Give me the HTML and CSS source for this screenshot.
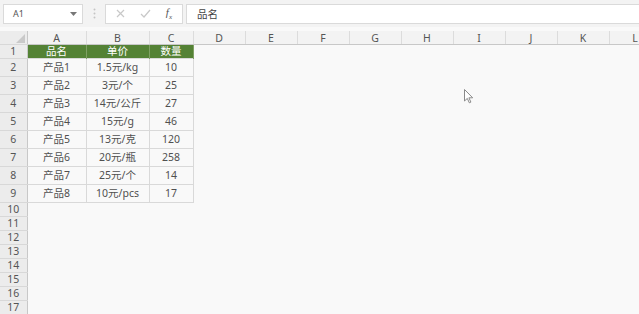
FILE: index.html
```html
<!DOCTYPE html>
<html lang="zh">
<head>
    <meta charset="UTF-8">
    <title>Sheet1</title>
    <link rel="stylesheet" href="styles.css">
</head>
<body>
    <div class="toolbar">
        <div class="namebox">
            <span>A1</span>
            <svg class="drop" width="7" height="4" viewBox="0 0 7 4"><path d="M0 0h7L3.5 4z" fill="#777"/></svg>
        </div>
        <div class="grip">
            <svg width="3" height="11" viewBox="0 0 3 11"><circle cx="1.5" cy="1.5" r="1" fill="#c4c4c4"/><circle cx="1.5" cy="5.5" r="1" fill="#c4c4c4"/><circle cx="1.5" cy="9.5" r="1" fill="#c4c4c4"/></svg>
        </div>
        <div class="fbuttons">
            <svg width="9" height="9" viewBox="0 0 9 9"><path d="M1 1l7 7M8 1L1 8" stroke="#c8c8c8" stroke-width="1.2"/></svg>
            <svg width="11" height="9" viewBox="0 0 11 9"><path d="M1 5l3 3 6-7" stroke="#c8c8c8" stroke-width="1.2" fill="none"/></svg>
            <span class="fx"><i>f</i><sub>x</sub></span>
        </div>
        <div class="formula">品名</div>
    </div>

    <div class="grid">
        <table class="sheet">
            <colgroup>
                <col class="c-head">
                <col class="c-a">
                <col class="c-b">
                <col class="c-c">
                <col class="c-std"><col class="c-std"><col class="c-std"><col class="c-std">
                <col class="c-std"><col class="c-std"><col class="c-std"><col class="c-std"><col class="c-std">
            </colgroup>
            <tr class="colhead">
                <th class="corner"><svg width="9" height="9" viewBox="0 0 9 9"><path d="M9 0v9H0z" fill="#c9c9c9"/></svg></th>
                <th>A</th><th>B</th><th>C</th><th>D</th><th>E</th><th>F</th>
                <th>G</th><th>H</th><th>I</th><th>J</th><th>K</th><th>L</th>
            </tr>
            <tr class="r-title">
                <th>1</th>
                <td class="title">品名</td><td class="title">单价</td><td class="title">数量</td>
                <td></td><td></td><td></td><td></td><td></td><td></td><td></td><td></td><td></td>
            </tr>
            <tr class="r-data"><th>2</th><td class="cell">产品1</td><td class="cell">1.5元/kg</td><td class="cell">10</td><td colspan="9"></td></tr>
            <tr class="r-data"><th>3</th><td class="cell">产品2</td><td class="cell">3元/个</td><td class="cell">25</td><td colspan="9"></td></tr>
            <tr class="r-data"><th>4</th><td class="cell">产品3</td><td class="cell">14元/公斤</td><td class="cell">27</td><td colspan="9"></td></tr>
            <tr class="r-data"><th>5</th><td class="cell">产品4</td><td class="cell">15元/g</td><td class="cell">46</td><td colspan="9"></td></tr>
            <tr class="r-data"><th>6</th><td class="cell">产品5</td><td class="cell">13元/克</td><td class="cell">120</td><td colspan="9"></td></tr>
            <tr class="r-data"><th>7</th><td class="cell">产品6</td><td class="cell">20元/瓶</td><td class="cell">258</td><td colspan="9"></td></tr>
            <tr class="r-data"><th>8</th><td class="cell">产品7</td><td class="cell">25元/个</td><td class="cell">14</td><td colspan="9"></td></tr>
            <tr class="r-data"><th>9</th><td class="cell">产品8</td><td class="cell">10元/pcs</td><td class="cell">17</td><td colspan="9"></td></tr>
            <tr class="r-empty"><th>10</th><td colspan="12"></td></tr>
            <tr class="r-empty"><th>11</th><td colspan="12"></td></tr>
            <tr class="r-empty"><th>12</th><td colspan="12"></td></tr>
            <tr class="r-empty"><th>13</th><td colspan="12"></td></tr>
            <tr class="r-empty"><th>14</th><td colspan="12"></td></tr>
            <tr class="r-empty"><th>15</th><td colspan="12"></td></tr>
            <tr class="r-empty"><th>16</th><td colspan="12"></td></tr>
            <tr class="r-empty"><th>17</th><td colspan="12"></td></tr>
        </table>

        <svg class="cursor" width="10" height="15" viewBox="0 0 10 15">
            <path d="M0.5 0.5v11.5l2.8-2.6 2 4.4 1.6-0.7-2-4.3h3.8z" fill="#fff" stroke="#8a8a8a" stroke-width="1"/>
        </svg>
    </div>
</body>
</html>
```

FILE: styles.css
```css
body {
    margin: 0;
    background-color: #f9f9f9;
    font-family: "Noto Sans", "Noto Sans CJK SC", sans-serif;
    color: #505050;
    width: 639px;
    height: 314px;
    overflow: hidden;
}
.toolbar {
    display: flex;
    align-items: center;
    height: 27px;
    padding: 0 0 0 3px;
    background-color: #f3f3f3;
    box-sizing: border-box;
}
.namebox {
    display: flex;
    align-items: center;
    justify-content: space-between;
    width: 80px;
    height: 20px;
    padding: 0 5px 0 9px;
    box-sizing: border-box;
    background-color: #fff;
    border: 1px solid #dadada;
    font-size: 9px;
    color: #555;
}
.grip {
    display: flex;
    align-items: center;
    justify-content: center;
    width: 22px;
}
.fbuttons {
    display: flex;
    align-items: center;
    justify-content: space-between;
    width: 78px;
    height: 20px;
    padding: 0 10px;
    box-sizing: border-box;
    background-color: #fff;
    border: 1px solid #dadada;
}
.fx {
    font-family: "Liberation Serif", serif;
    font-size: 11px;
    color: #555;
}
.fx sub {
    font-size: 7px;
    font-style: italic;
}
.formula {
    flex: 1;
    height: 20px;
    margin-left: 3px;
    padding-left: 10px;
    box-sizing: border-box;
    background-color: #fff;
    border: 1px solid #dadada;
    border-right: none;
    font-size: 10.5px;
    line-height: 18px;
    color: #444;
}
.grid {
    position: relative;
    padding-top: 4px;
}
.sheet {
    table-layout: fixed;
    border-collapse: collapse;
    width: 661px;
    font-size: 10.5px;
}
.c-head { width: 27px; }
.c-a { width: 59px; }
.c-b { width: 63px; }
.c-c { width: 44px; }
.c-std { width: 52px; }
.sheet th,
.sheet td {
    padding: 0;
    text-align: center;
    font-weight: normal;
    white-space: nowrap;
    overflow: hidden;
}
.colhead th {
    height: 12px;
    line-height: 12px;
    background-color: #f3f3f3;
    border-right: 1px solid #dcdcdc;
    border-bottom: 1px solid #c8c8c8;
    font-size: 10.5px;
    color: #555;
}
.colhead .corner {
    text-align: right;
    vertical-align: bottom;
    padding: 0 2px 1px 0;
}
.colhead .corner svg {
    display: block;
    margin-left: auto;
}
.sheet tr > th:first-child {
    background-color: #ececec;
    border-right: 1px solid #c8c8c8;
    border-bottom: 1px solid #d8d8d8;
    color: #555;
}
.r-title th,
.r-title td {
    height: 13px;
    line-height: 13px;
}
.title {
    background-color: #548235;
    color: #fff;
    border-right: 1px solid #7fa064;
}
.r-data th,
.r-data td {
    height: 17px;
    line-height: 17px;
}
.cell {
    border: 1px solid #d9d9d9;
}
.r-empty th,
.r-empty td {
    height: 13px;
    line-height: 13px;
}
.cursor {
    position: absolute;
    left: 464px;
    top: 62px;
}
```
